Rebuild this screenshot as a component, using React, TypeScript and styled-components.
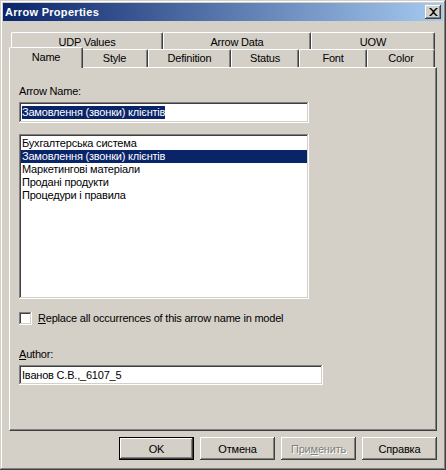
import React from 'react'
import styled, { createGlobalStyle } from 'styled-components'

const GlobalStyle = createGlobalStyle`
    html, body {
        margin: 0;
        padding: 0;
        background: #d4d0c8;
    }
    body {
        font-family: 'Liberation Sans', Arial, sans-serif;
        font-size: 11px;
        letter-spacing: -0.2px;
        color: #000;
    }
    * {
        box-sizing: border-box;
    }
`

const backTabs = [
    { title: 'UDP Values', width: 152 },
    { title: 'Arrow Data', width: 148 },
    { title: 'UOW', width: 124 },
]

const frontTabs = [
    { title: 'Name', width: 70 },
    { title: 'Style', width: 67 },
    { title: 'Definition', width: 83 },
    { title: 'Status', width: 68 },
    { title: 'Font', width: 68 },
    { title: 'Color', width: 68 },
]

const listItems = [
    'Бухгалтерська система',
    'Замовлення (звонки) клієнтів',
    'Маркетингові матеріали',
    'Продані продукти',
    'Процедури і правила',
]

const App: React.FC = () => {
    const [selected, setSelected] = React.useState<number>(1)
    const [replaceAll, setReplaceAll] = React.useState<boolean>(false)

    return (
        <>
            <GlobalStyle />
            <Window>
                <TitleBar>
                    <Title>Arrow Properties</Title>
                    <CloseButton aria-label="Close">
                        <svg width="9" height="8" viewBox="0 0 9 8">
                            <path
                                d="M0 0h2l2.5 2.5L7 0h2L5.5 3.5V4.5L9 8H7L4.5 5.5L2 8H0l3.5-3.5V3.5z"
                                fill="#000"
                            />
                        </svg>
                    </CloseButton>
                </TitleBar>

                <Body>
                    <TabStrip>
                        <BackRow>
                            {backTabs.map((t) => (
                                <BackTab key={t.title} $width={t.width}>
                                    {t.title}
                                </BackTab>
                            ))}
                        </BackRow>
                        <FrontRow>
                            {frontTabs.map((t, i) => (
                                <FrontTab
                                    key={t.title}
                                    $width={t.width}
                                    className={i === 0 ? 'active' : ''}
                                >
                                    {t.title}
                                </FrontTab>
                            ))}
                        </FrontRow>
                    </TabStrip>

                    <Panel>
                        <Label>Arrow Name:</Label>
                        <Field $width={290} $height={21}>
                            <Highlight>Замовлення (звонки) клієнтів</Highlight>
                        </Field>

                        <ListBox>
                            {listItems.map((item, i) => (
                                <ListItem
                                    key={item}
                                    className={i === selected ? 'active' : ''}
                                    onClick={() => setSelected(i)}
                                >
                                    {item}
                                </ListItem>
                            ))}
                        </ListBox>

                        <CheckRow onClick={() => setReplaceAll(!replaceAll)}>
                            <CheckBox>{replaceAll ? '✓' : ''}</CheckBox>
                            <span>
                                <u>R</u>eplace all occurrences of this arrow name in model
                            </span>
                        </CheckRow>

                        <AuthorLabel>
                            <u>A</u>uthor:
                        </AuthorLabel>
                        <Field $width={304} $height={20}>
                            Іванов С.В.,_6107_5
                        </Field>
                    </Panel>

                    <ButtonRow>
                        <DialogButton $default>OK</DialogButton>
                        <DialogButton>Отмена</DialogButton>
                        <DialogButton disabled>
                            При<u>м</u>енить
                        </DialogButton>
                        <DialogButton>Справка</DialogButton>
                    </ButtonRow>
                </Body>
            </Window>
        </>
    )
}

export default App

const Window = styled.div`
    width: 446px;
    height: 470px;
    padding: 3px;
    background: #d4d0c8;
    box-shadow: inset -1px -1px #404040, inset 1px 1px #d4d0c8,
        inset -2px -2px #808080, inset 2px 2px #ffffff;
    display: flex;
    flex-direction: column;
`

const TitleBar = styled.div`
    height: 18px;
    padding: 0 2px 0 2px;
    background: linear-gradient(to right, #0a246a, #a6caf0);
    display: flex;
    align-items: center;
    justify-content: space-between;
`

const Title = styled.span`
    color: #fff;
    font-weight: bold;
    font-size: 11px;
    letter-spacing: 0.3px;
`

const CloseButton = styled.button`
    width: 16px;
    height: 14px;
    padding: 0;
    border: none;
    background: #d4d0c8;
    box-shadow: inset -1px -1px #404040, inset 1px 1px #ffffff,
        inset -2px -2px #808080, inset 2px 2px #d4d0c8;
    display: flex;
    align-items: center;
    justify-content: center;
`

const Body = styled.div`
    flex: 1;
    padding: 11px 6px 0 6px;
    display: flex;
    flex-direction: column;
`

const TabStrip = styled.div`
    display: flex;
    flex-direction: column;
    padding: 0 2px;
`

const BackRow = styled.div`
    display: flex;
    height: 17px;
`

const TabBase = styled.div<{ $width: number }>`
    width: ${(p) => p.$width}px;
    flex-shrink: 0;
    background: #d4d0c8;
    border-top: 1px solid #ffffff;
    border-left: 1px solid #ffffff;
    border-right: 1px solid #404040;
    border-top-left-radius: 2px;
    border-top-right-radius: 2px;
    box-shadow: inset -1px 0 #808080;
    text-align: center;
    line-height: 13px;
`

const BackTab = styled(TabBase)`
    height: 18px;
    padding-top: 3px;
`

const FrontRow = styled.div`
    display: flex;
    align-items: flex-end;
    height: 18px;
`

const FrontTab = styled(TabBase)`
    height: 18px;
    padding-top: 2px;
    position: relative;
    &.active {
        width: ${(p) => p.$width + 4}px;
        height: 21px;
        margin: 0 -2px -1px -2px;
        padding-top: 3px;
        z-index: 1;
    }
`

const Panel = styled.div`
    width: 428px;
    height: 364px;
    padding: 0 9px;
    background: #d4d0c8;
    border-top: 1px solid #ffffff;
    border-left: 1px solid #ffffff;
    border-right: 1px solid #404040;
    border-bottom: 1px solid #404040;
    box-shadow: inset -1px -1px #808080;
    display: flex;
    flex-direction: column;
`

const Label = styled.div`
    margin-top: 17px;
    line-height: 13px;
`

const Field = styled.div<{ $width: number; $height: number }>`
    width: ${(p) => p.$width}px;
    height: ${(p) => p.$height}px;
    margin-top: 4px;
    padding: 0 3px;
    background: #fff;
    box-shadow: inset -1px -1px #ffffff, inset 1px 1px #808080,
        inset -2px -2px #d4d0c8, inset 2px 2px #404040;
    display: flex;
    align-items: center;
    white-space: nowrap;
`

const Highlight = styled.span`
    background: #0a246a;
    color: #fff;
    line-height: 13px;
`

const ListBox = styled.div`
    width: 290px;
    height: 165px;
    margin-top: 11px;
    padding: 3px 2px;
    background: #fff;
    box-shadow: inset -1px -1px #ffffff, inset 1px 1px #808080,
        inset -2px -2px #d4d0c8, inset 2px 2px #404040;
`

const ListItem = styled.div`
    height: 13px;
    line-height: 13px;
    padding-left: 1px;
    white-space: nowrap;
    cursor: default;
    &.active {
        background: #0a246a;
        color: #fff;
    }
`

const CheckRow = styled.div`
    margin-top: 13px;
    display: flex;
    align-items: center;
    gap: 6px;
    line-height: 13px;
    cursor: default;
`

const CheckBox = styled.div`
    width: 13px;
    height: 13px;
    background: #fff;
    box-shadow: inset -1px -1px #ffffff, inset 1px 1px #808080,
        inset -2px -2px #d4d0c8, inset 2px 2px #404040;
    font-size: 10px;
    line-height: 13px;
    text-align: center;
`

const AuthorLabel = styled.div`
    margin-top: 23px;
    line-height: 13px;
`

const ButtonRow = styled.div`
    margin-top: 6px;
    display: flex;
    justify-content: flex-end;
    gap: 6px;
`

const DialogButton = styled.button<{ $default?: boolean }>`
    width: 75px;
    height: 23px;
    padding: 0;
    font-family: 'Liberation Sans', Arial, sans-serif;
    font-size: 11px;
    letter-spacing: -0.2px;
    color: #000;
    background: #d4d0c8;
    border: ${(p) => (p.$default ? '1px solid #000' : 'none')};
    box-shadow: inset -1px -1px #404040, inset 1px 1px #ffffff,
        inset -2px -2px #808080, inset 2px 2px #d4d0c8;
    &:disabled {
        color: #808080;
        text-shadow: 1px 1px #ffffff;
    }
`
